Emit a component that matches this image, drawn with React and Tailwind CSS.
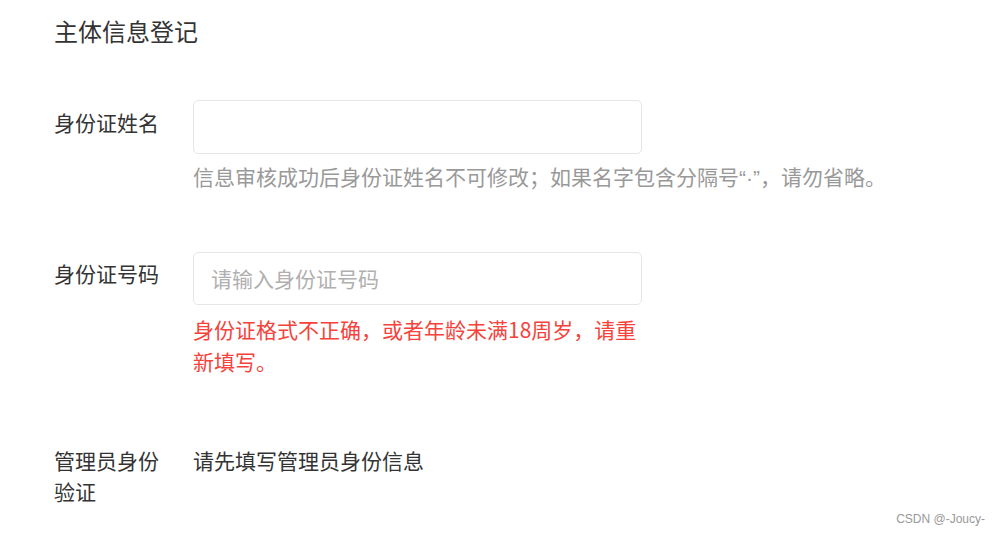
import React from 'react'

const font = { fontFamily: '"Noto Sans CJK SC", "Noto Sans", sans-serif' }

const Row = ({ label, children, className = '' }) => (
  <div className={`flex ${className}`}>
    <div className="w-[139px] shrink-0 pr-[24px]">{label}</div>
    <div className="w-[449px]">{children}</div>
  </div>
)

export default function App() {
  return (
    <div
      className="relative w-[999px] h-[536px] bg-white pl-[54px] text-[#333] overflow-hidden"
      style={font}
    >
      <h1 className="pt-[17px] pb-[2px] text-[24px] leading-[28px] font-normal">主体信息登记</h1>

      {/* 身份证姓名 */}
      <Row
        className="mt-[53px]"
        label={<div className="pt-[6px] text-[21px] leading-[32px]">身份证姓名</div>}
      >
        <div className="h-[54px] w-[449px] rounded-[5px] border border-[#e6e6e6] bg-white"></div>
        <p className="mt-[6px] h-[32px] text-[21px] leading-[32px] text-[#999] whitespace-nowrap">
          信息审核成功后身份证姓名不可修改；如果名字包含分隔号
          <span className="leading-none" style={{ fontFamily: '"Liberation Sans", Arial, sans-serif' }}>“·”</span>
          ，请勿省略。
        </p>
      </Row>

      {/* 身份证号码 */}
      <Row
        className="mt-[60px]"
        label={<div className="pt-[5px] text-[21px] leading-[32px]">身份证号码</div>}
      >
        <div className="flex h-[53px] w-[449px] items-center rounded-[5px] border border-[#e6e6e6] bg-white pl-[17px]">
          <span className="text-[21px] text-[#b0b0b0]">请输入身份证号码</span>
        </div>
        <p className="mt-[8px] text-[21px] leading-[32px] text-[#f5423b]">
          身份证格式不正确，或者年龄未满18周岁，请重新填写。
        </p>
      </Row>

      {/* 管理员身份验证 */}
      <Row
        className="mt-[68px]"
        label={<div className="text-[21px] leading-[31px]">管理员身份验证</div>}
      >
        <div className="text-[21px] leading-[31px]">请先填写管理员身份信息</div>
      </Row>

      <div
        className="absolute right-[14px] bottom-[8px] text-[12px] text-[#999]"
        style={{ fontFamily: '"Liberation Sans", Arial, sans-serif' }}
      >
        CSDN @-Joucy-
      </div>
    </div>
  )
}
